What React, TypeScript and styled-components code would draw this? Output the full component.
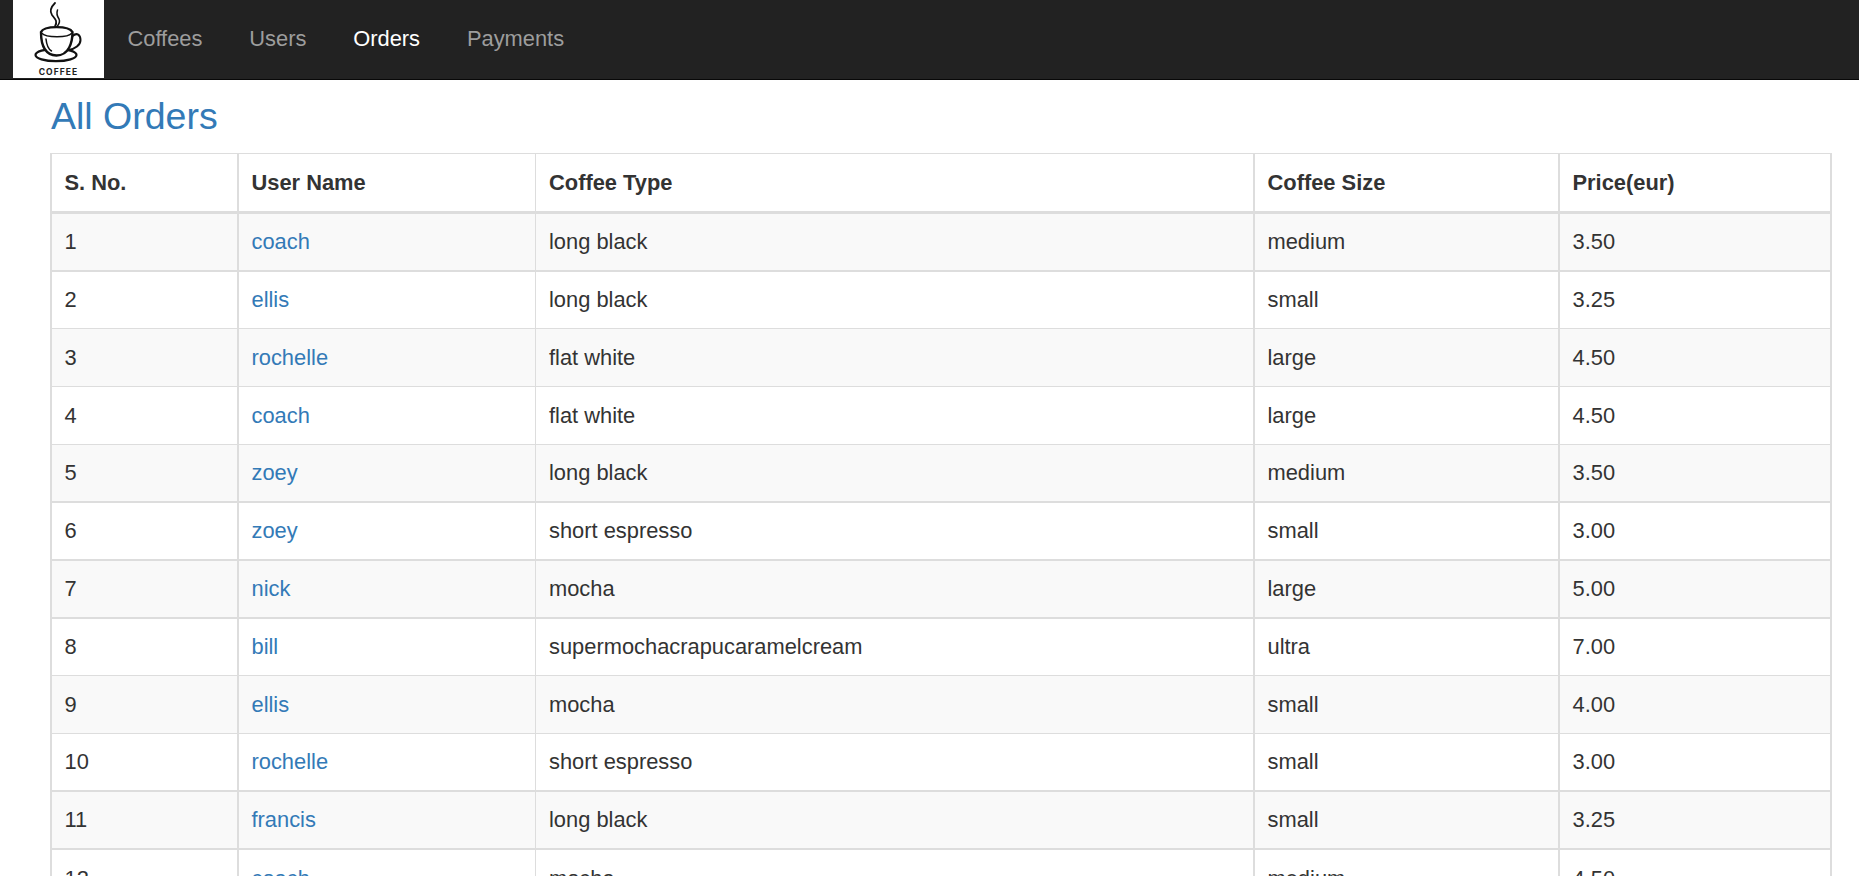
import React from "react";
import styled, { createGlobalStyle } from "styled-components";

const GlobalStyle = createGlobalStyle`
  html, body {
    margin: 0;
    padding: 0;
    overflow: hidden;
    height: 100%;
    background: #fff;
  }
  body {
    font-family: "Liberation Sans", Arial, sans-serif;
    font-size: 21.875px;
    line-height: 31.25px;
    color: #333;
  }
`;

const NavBar = styled.nav`
  display: flex;
  height: 79px;
  padding-left: 13px;
  background: #222;
  border-bottom: 1px solid #080808;
`;

const LogoBox = styled.a`
  display: block;
  width: 91px;
  height: 78px;
  background: #fff;
`;

const NavLinks = styled.ul`
  display: flex;
  list-style: none;
  margin: 0;
  padding: 0;
`;

const NavLink = styled.a<{ $active?: boolean }>`
  display: block;
  padding: 23.44px;
  color: ${(p) => (p.$active ? "#fff" : "#9d9d9d")};
  text-decoration: none;
`;

const Content = styled.main`
  padding: 16px 0 0 50px;
`;

const Title = styled.h3`
  margin: 0 0 16px;
  padding-left: 1px;
  font-size: 37.5px;
  line-height: 41px;
  font-weight: 500;
  color: #337ab7;
`;

const Table = styled.table`
  width: 1782px;
  table-layout: fixed;
  border-collapse: separate;
  border-spacing: 0;
  border-top: 1px solid #ddd;
  border-left: 2px solid #ddd;
`;

const HeadCell = styled.th<{ $right: number; $inset: number }>`
  box-sizing: border-box;
  height: 60px;
  padding: 0 12.5px 0 ${(p) => p.$inset}px;
  text-align: left;
  font-weight: 700;
  border-right: ${(p) => p.$right}px solid #ddd;
  border-bottom: 3px solid #ddd;
`;

const Cell = styled.td<{ $right: number; $rule: number; $height: number; $inset: number }>`
  box-sizing: border-box;
  height: ${(p) => p.$height}px;
  padding: 0 12.5px 0 ${(p) => p.$inset}px;
  border-right: ${(p) => p.$right}px solid #ddd;
  border-bottom: ${(p) => p.$rule}px solid #ddd;
`;

const Row = styled.tr<{ $odd: boolean }>`
  background: ${(p) => (p.$odd ? "#f9f9f9" : "#fff")};
`;

const UserLink = styled.a`
  color: #337ab7;
  text-decoration: none;
`;

const columns = [
  { label: "S. No.", width: 187, rule: 2, inset: 12.5 },
  { label: "User Name", width: 297, rule: 1, inset: 12.5 },
  { label: "Coffee Type", width: 719, rule: 2, inset: 13 },
  { label: "Coffee Size", width: 305, rule: 2, inset: 12.5 },
  { label: "Price(eur)", width: 272, rule: 2, inset: 12.5 },
];

// the screenshot was taken at a fractional browser zoom, so row pitch and rule width wobble by a pixel
const orders = [
  { user: "coach", type: "long black", size: "medium", price: "3.50", height: 58, rule: 2 },
  { user: "ellis", type: "long black", size: "small", price: "3.25", height: 57, rule: 1 },
  { user: "rochelle", type: "flat white", size: "large", price: "4.50", height: 58, rule: 1 },
  { user: "coach", type: "flat white", size: "large", price: "4.50", height: 58, rule: 1 },
  { user: "zoey", type: "long black", size: "medium", price: "3.50", height: 58, rule: 2 },
  { user: "zoey", type: "short espresso", size: "small", price: "3.00", height: 58, rule: 2 },
  { user: "nick", type: "mocha", size: "large", price: "5.00", height: 58, rule: 2 },
  { user: "bill", type: "supermochacrapucaramelcream", size: "ultra", price: "7.00", height: 57, rule: 1 },
  { user: "ellis", type: "mocha", size: "small", price: "4.00", height: 58, rule: 1 },
  { user: "rochelle", type: "short espresso", size: "small", price: "3.00", height: 58, rule: 2 },
  { user: "francis", type: "long black", size: "small", price: "3.25", height: 58, rule: 2 },
  { user: "coach", type: "mocha", size: "medium", price: "4.50", height: 58, rule: 1 },
];

const LogoText = styled.text`
  font-family: Inter, "Liberation Sans", sans-serif;
  font-size: 8.5px;
  font-weight: 700;
  letter-spacing: 1.1px;
  fill: #222;
`;

const CoffeeLogo = () => (
  <svg width="91" height="78" viewBox="0 0 91 78">
    <g fill="none" stroke="#111" strokeLinecap="round">
      <path d="M42 3C37 8 37 12 39 15C42 19 45 21 42 26.5" strokeWidth="1.8" />
      <path d="M44.5 10C43 14 44 16 46 19C47.5 22 46 24 44.5 26" strokeWidth="1.5" />
      <ellipse cx="43" cy="55" rx="20.5" ry="6.2" strokeWidth="2.2" />
      <path
        d="M28 32C28 42 30 55 43.5 55.5C56 55.5 59.5 42 59.5 32C56 25.5 31 25.5 28 32Z"
        fill="#fff"
        strokeWidth="2.4"
      />
      <path d="M28.5 33C33 38 55 38 59 33" strokeWidth="1.3" />
      <path d="M59.5 36C64 32 67.5 35 67.5 40C67.5 45 62 49 55.5 50" strokeWidth="2" />
      <path d="M33 39C33.5 44 35 49 38.5 51" strokeWidth="1.5" />
    </g>
    <LogoText x="45.5" y="75" textAnchor="middle">COFFEE</LogoText>
  </svg>
);

const App: React.FC = () => {
  return (
    <>
      <GlobalStyle />
      <NavBar>
        <LogoBox href="#">
          <CoffeeLogo />
        </LogoBox>
        <NavLinks>
          <li><NavLink href="#">Coffees</NavLink></li>
          <li><NavLink href="#">Users</NavLink></li>
          <li><NavLink href="#" $active>Orders</NavLink></li>
          <li><NavLink href="#">Payments</NavLink></li>
        </NavLinks>
      </NavBar>
      <Content>
        <Title>All Orders</Title>
        <Table>
          <colgroup>
            {columns.map((c) => (
              <col key={c.label} width={c.width} />
            ))}
          </colgroup>
          <thead>
            <tr>
              {columns.map((c) => (
                <HeadCell key={c.label} $right={c.rule} $inset={c.inset}>{c.label}</HeadCell>
              ))}
            </tr>
          </thead>
          <tbody>
            {orders.map((o, i) => {
              const cell = (n: number) => ({
                $right: columns[n].rule,
                $inset: columns[n].inset,
                $rule: o.rule,
                $height: o.height,
              });
              return (
                <Row key={i} $odd={i % 2 === 0}>
                  <Cell {...cell(0)}>{i + 1}</Cell>
                  <Cell {...cell(1)}><UserLink href="#">{o.user}</UserLink></Cell>
                  <Cell {...cell(2)}>{o.type}</Cell>
                  <Cell {...cell(3)}>{o.size}</Cell>
                  <Cell {...cell(4)}>{o.price}</Cell>
                </Row>
              );
            })}
          </tbody>
        </Table>
      </Content>
    </>
  );
};

export default App;
